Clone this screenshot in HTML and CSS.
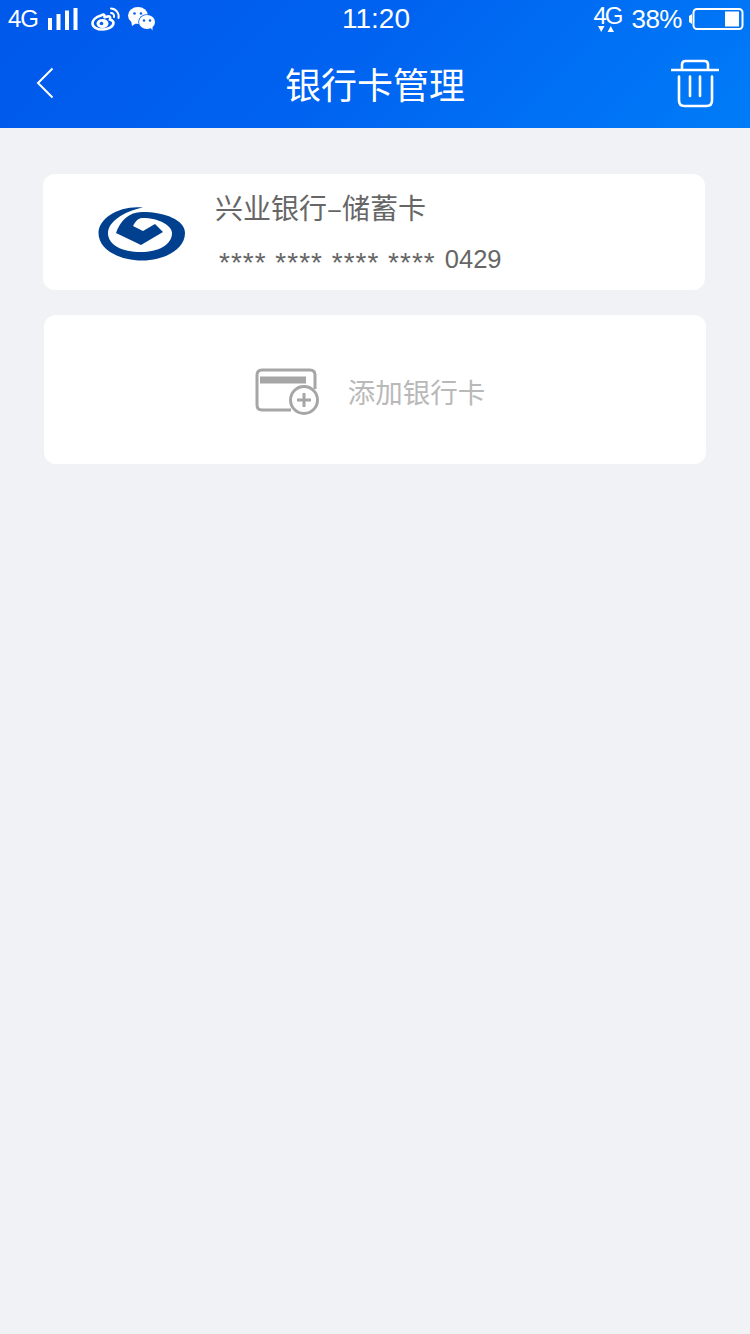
FILE: index.html
```html
<!DOCTYPE html>
<html lang="zh">
<head>
<meta charset="utf-8">
<title>银行卡管理</title>
<link rel="stylesheet" href="styles.css">
</head>
<body>
<header class="top">
  <div class="status">
    <div class="status-left">
      <span class="st-text net">4G</span>
      <svg class="bars" width="30" height="22" viewBox="0 0 30 22"><path d="M0 10h4v12H0zM8.500 6h4v16h-4zM17 2.500h4V22h-4zM25.500 0h4v22h-4z" fill="#fff"/></svg>
      <svg class="weibo" width="30" height="24" viewBox="0 0 30 24"><path d="M10 8.500C4.500 10 1.500 13.500 1.500 16.500c0 3.500 4.500 6 10 6s11-3 11-6.500c0-2-2-3-3.500-3.500 1-2.500-.5-3.500-2.500-3-1.500.5-2.500 1-3 .5.500-2.500-1-3-3.500-1.500z" fill="none" stroke="#fff" stroke-width="2.600"/><ellipse cx="11.500" cy="16.500" rx="6" ry="4.500" fill="#fff"/><circle cx="10.500" cy="16.500" r="1.800" fill="#0062ee"/><path d="M20 1.500c4.500 0 8.500 4.500 7.500 9.500M20 6c2 0 3.500 1.500 3 4" fill="none" stroke="#fff" stroke-width="2" stroke-linecap="round"/></svg>
      <svg class="wechat" width="28" height="24" viewBox="0 0 28 24"><ellipse cx="10" cy="8.500" rx="10" ry="8.500" fill="#fff"/><path d="M3 13l1 6 6-4z" fill="#fff"/><ellipse cx="19" cy="15" rx="8.800" ry="7.800" fill="#0062ee"/><ellipse cx="19" cy="15" rx="8" ry="7" fill="#fff"/><path d="M22 20l2.500 3.500 0-6z" fill="#fff"/><circle cx="6.500" cy="6.500" r="1.300" fill="#0062ee"/><circle cx="13" cy="6.500" r="1.300" fill="#0062ee"/><circle cx="16" cy="13.500" r="1.200" fill="#0062ee"/><circle cx="22" cy="13.500" r="1.200" fill="#0062ee"/></svg>
    </div>
    <div class="time">11:20</div>
    <div class="status-right">
      <div class="net2">
        <span class="st-text">4G</span>
        <svg class="arrows" width="18" height="7" viewBox="0 0 18 7"><path d="M0 0h6.500L3.250 6zM9.500 6l3.250-6L16 6z" fill="#fff"/></svg>
      </div>
      <span class="st-text pct">38%</span>
      <svg class="battery" width="55" height="22" viewBox="0 0 55 22"><path d="M3 6v10L0 14V8z" fill="#fff"/><rect x="4.500" y="1" width="49" height="20" rx="3.500" fill="none" stroke="#fff" stroke-width="2"/><rect x="36" y="3.500" width="14" height="15" fill="#fff"/></svg>
    </div>
  </div>
  <div class="nav">
    <svg class="back" width="18" height="32" viewBox="0 0 18 32"><path d="M16.500 1.500 2 16l14.500 14.500" fill="none" stroke="#fff" stroke-width="2"/></svg>
    <h1 class="title">银行卡管理</h1>
    <svg class="trash" width="50" height="50" viewBox="0 0 50 50"><path d="M0 11h48" stroke="#fff" stroke-width="2.600" fill="none"/><path d="M11 10V5.500Q11 2 14.500 2h19Q37 2 37 5.500V10" stroke="#fff" stroke-width="2.600" fill="none"/><path d="M8 17.500v24q0 5.500 5.500 5.500h22q5.500 0 5.500-5.500v-24M19 17.500V37M29 17.500V37" stroke="#fff" stroke-width="2.600" fill="none" stroke-linecap="round"/></svg>
  </div>
</header>
<main class="content">
  <section class="card bank">
    <svg class="logo" width="90" height="60" viewBox="96 204 90 60">
      <path fill="#00408f" d="M143 207.500C120 205 98.500 218 98.500 233C98.500 250 120 260.500 142 260.500C165 260.500 185 249 185 233C185 220 165 212 142 212C129 212 120 221 116 233L141 245L163 232L155 224L143 231L133 226C135 222 138 218 142 218C160 218 172 226 172 233C172 245 158 252 141 252C122 252 108 245 108 233C108 222 124 211 143 207.500Z"/>
    </svg>
    <div class="bank-info">
      <div class="bank-name">兴业银行–储蓄卡</div>
      <div class="bank-no"><span class="mask">**** **** **** ****</span> 0429</div>
    </div>
  </section>
  <button class="card add" type="button">
    <svg class="add-icon" width="66" height="48" viewBox="0 0 66 48">
      <path d="M36 43H7q-5 0-5-5V8q0-5 5-5h48q5 0 5 5v14" fill="none" stroke="#a6a6a6" stroke-width="3"/>
      <rect x="5" y="9.500" width="46" height="7" fill="#a6a6a6"/>
      <circle cx="49" cy="33" r="13.500" fill="#fff" stroke="#a6a6a6" stroke-width="3"/>
      <path d="M49 26v14M42 33h14" stroke="#a6a6a6" stroke-width="3"/>
    </svg>
    <span class="add-label">添加银行卡</span>
  </button>
</main>
</body>
</html>
```
FILE: styles.css
```css
* { box-sizing: border-box; }
html, body { margin: 0; padding: 0; }
body {
  width: 750px;
  height: 1334px;
  overflow: hidden;
  background: #f0f2f6;
  font-family: "Noto Sans CJK SC", "Liberation Sans", sans-serif;
}
.top {
  height: 128px;
  background: linear-gradient(135deg, #0058ea 0%, #0062f0 45%, #007cf8 100%);
  color: #fff;
}
.status {
  height: 38px;
  display: grid;
  grid-template-columns: 1fr auto 1fr;
  align-items: center;
  padding: 0 6px 0 8px;
}
.status-left { display: flex; align-items: center; }
.status-right { display: flex; align-items: center; justify-content: flex-end; }
.st-text {
  font-family: "Liberation Sans", sans-serif;
  font-size: 24px;
  line-height: 26px;
}
.net { letter-spacing: -1px; }
.bars { margin-left: 10px; }
.weibo { margin-left: 13px; }
.wechat { margin-left: 7px; }
.time { font-family: "Liberation Sans", sans-serif; font-size: 28px; line-height: 38px; }
.net2 { display: flex; flex-direction: column; align-items: center; width: 28px; }
.net2 .st-text { letter-spacing: -2px; line-height: 22px; }
.arrows { margin-top: -1px; }
.pct { margin-left: 10px; font-size: 26px; letter-spacing: -0.5px; }
.battery { margin-left: 7px; }
.nav {
  height: 90px;
  display: grid;
  grid-template-columns: 1fr auto 1fr;
  align-items: center;
  padding: 0 30px;
}
.back { justify-self: start; margin-left: 6px; }
.title { margin: 0; font-size: 36px; font-weight: 400; line-height: 50px; letter-spacing: 0; }
.trash { justify-self: end; margin: 2px -1px 0 0; }
.content { padding: 46px 44px 0 43px; display: flex; flex-direction: column; }
.card { background: #fff; border-radius: 12px; border: 0; width: 662px; }
.bank { height: 116px; display: flex; padding-left: 53px; }
.logo { margin-top: 30px; }
.bank-info { margin-left: 29px; padding-top: 13px; color: #666; }
.bank-name { font-size: 28px; line-height: 40px; white-space: nowrap; }
.bank-no { font-family: "Liberation Sans", sans-serif; font-size: 25.500px; line-height: 30px; margin: 17px 0 0 4px; white-space: nowrap; }
.mask { font-size: 28px; letter-spacing: 1px; vertical-align: -4px; line-height: 20px; margin-right: 2px; }
.add {
  height: 149px;
  margin: 25px 0 0 1px;
  display: flex;
  align-items: center;
  justify-content: center;
  padding: 2px 10px 0 0;
  font-family: inherit;
}
.add-icon { display: block; }
.add-label { margin-left: 27px; font-size: 27.500px; line-height: 40px; color: #b9b9b9; }
```
